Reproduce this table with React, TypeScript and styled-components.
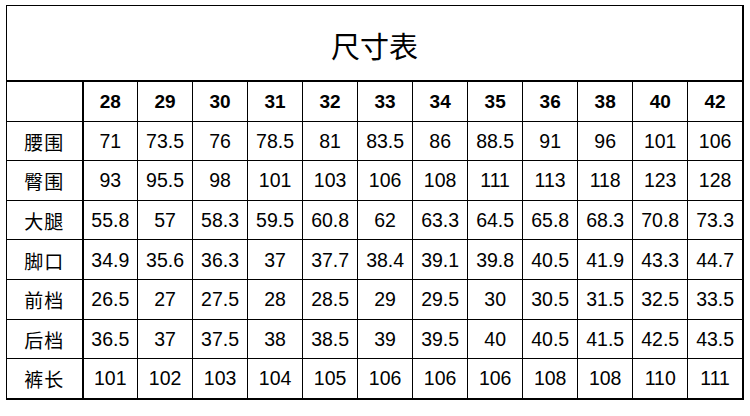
import React from "react";
import styled, {createGlobalStyle} from "styled-components";

const GlobalStyle = createGlobalStyle`
  html, body {
    margin: 0;
    padding: 0;
    background: #fff;
  }
`;

const Page = styled.div`
  width: 750px;
  height: 416px;
  padding: 5px 0 0 6px;
  box-sizing: border-box;
  background: #fff;
`;

const Table = styled.table`
  border-collapse: collapse;
  table-layout: fixed;
  width: 738px;
  color: #000;
`;

const TitleCell = styled.th`
  height: 70px;
  padding: 4px 0 0 0;
  border-top: 1px solid #000;
  border-left: 1px solid #000;
  border-right: 2px solid #000;
  border-bottom: 2px solid #000;
  font-family: "Noto Sans CJK SC", sans-serif;
  font-weight: 400;
  font-size: 29px;
  text-align: center;
  vertical-align: middle;
`;

const Cell = styled.td<{ $head?: boolean; $label?: boolean; $last?: boolean; $bottom?: boolean }>`
  height: ${p => (p.$head ? 36.6 : 37.6)}px;
  padding: ${p => (p.$head ? "2px 0 0 0" : "1px 0 0 0")};
  border: 1px solid #000;
  border-right-width: ${p => (p.$label || p.$last ? 2 : 1)}px;
  border-bottom-width: ${p => (p.$bottom ? 2 : 1)}px;
  text-align: center;
  vertical-align: middle;
  font-family: ${p => (p.$label ? '"Noto Sans CJK SC", sans-serif' : '"Liberation Sans", Arial, sans-serif')};
  font-size: ${p => (p.$label ? 19 : p.$head ? 19 : 19.5)}px;
  font-weight: ${p => (p.$head ? 700 : 400)};
  letter-spacing: ${p => (p.$label ? "1px" : "0")};
`;

const sizes = ["28", "29", "30", "31", "32", "33", "34", "35", "36", "38", "40", "42"];

const rows: [string, string[]][] = [
    ["腰围", ["71", "73.5", "76", "78.5", "81", "83.5", "86", "88.5", "91", "96", "101", "106"]],
    ["臀围", ["93", "95.5", "98", "101", "103", "106", "108", "111", "113", "118", "123", "128"]],
    ["大腿", ["55.8", "57", "58.3", "59.5", "60.8", "62", "63.3", "64.5", "65.8", "68.3", "70.8", "73.3"]],
    ["脚口", ["34.9", "35.6", "36.3", "37", "37.7", "38.4", "39.1", "39.8", "40.5", "41.9", "43.3", "44.7"]],
    ["前档", ["26.5", "27", "27.5", "28", "28.5", "29", "29.5", "30", "30.5", "31.5", "32.5", "33.5"]],
    ["后档", ["36.5", "37", "37.5", "38", "38.5", "39", "39.5", "40", "40.5", "41.5", "42.5", "43.5"]],
    ["裤长", ["101", "102", "103", "104", "105", "106", "106", "106", "108", "108", "110", "111"]],
];

export default function App() {
    return (
        <>
            <GlobalStyle/>
            <Page>
                <Table>
                    <colgroup>
                        <col style={{width: 76}}/>
                        {sizes.map(s => <col key={s} style={{width: 55}}/>)}
                    </colgroup>
                    <thead>
                        <tr>
                            <TitleCell colSpan={13}>尺寸表</TitleCell>
                        </tr>
                    </thead>
                    <tbody>
                        <tr>
                            <Cell $label $head/>
                            {sizes.map((s, i) =>
                                <Cell key={s} $head $last={i === sizes.length - 1}>{s}</Cell>
                            )}
                        </tr>
                        {rows.map(([name, values], r) =>
                            <tr key={name}>
                                <Cell $label $bottom={r === rows.length - 1}>{name}</Cell>
                                {values.map((v, i) =>
                                    <Cell key={i}
                                          $last={i === values.length - 1}
                                          $bottom={r === rows.length - 1}>{v}</Cell>
                                )}
                            </tr>
                        )}
                    </tbody>
                </Table>
            </Page>
        </>
    );
}
